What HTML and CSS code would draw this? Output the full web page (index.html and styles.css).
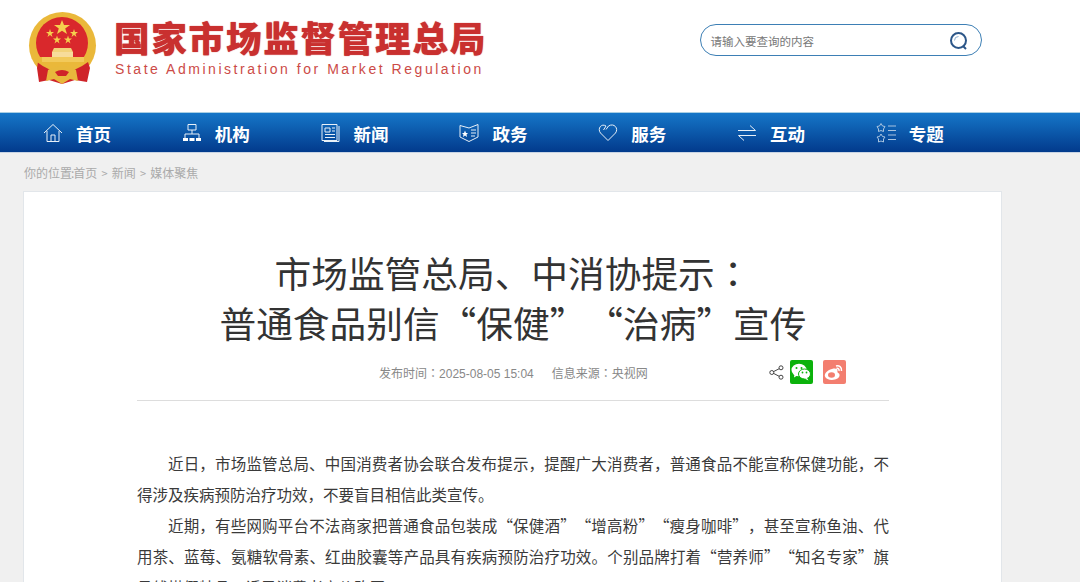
FILE: index.html
```html
<!DOCTYPE html>
<html lang="zh-CN">
<head>
<meta charset="utf-8">
<title>市场监管总局、中消协提示</title>
<link rel="stylesheet" href="styles.css">
</head>
<body>
<header class="top">
  <div class="brand">
    <svg class="emblem" width="70" height="72" viewBox="0 0 70 72">
      <circle cx="34.500" cy="33.500" r="33.500" fill="#eab83a"/>
      <circle cx="34" cy="31" r="26" fill="#d9282c"/>
      <path d="M10 50 L9 56 L11 70 L21 68 L34 72 L47 68 L59 70 L62 56 L60 50 Z" fill="#cf2329"/>
      <path d="M12 45 H57 L60 50 Q34 70 9 50 Z" fill="#eab83a"/>
      <path d="M14 45 H56 V50 H14 Z" fill="#f2c95a"/>
      <path d="M24 40 H45 V45 H24 Z" fill="#f7dc9b"/>
      <path d="M26 36 H43 L45 40 H24 Z" fill="#f3d27a"/>
      <path d="M20 58 Q34 50 48 58 L50 69 L42 67 L34 72 L26 67 L18 69 Z" fill="#e8b83c"/>
      <path d="M27 60 Q34 56 41 60 L38 64 H30 Z" fill="#cf2329"/>
      <polygon class="star" points="34,8 36,13 42,13 37.200,16.500 39,22 34,18.700 29,22 30.800,16.500 26,13 32,13"/>
      <polygon class="star" points="22,17 23,20 26,20 23.500,22 24.500,25 22,23 19.500,25 20.500,22 18,20 21,20"/>
      <polygon class="star" points="46,17 47,20 50,20 47.500,22 48.500,25 46,23 43.500,25 44.500,22 42,20 45,20"/>
      <polygon class="star" points="29,23.500 30,26.500 33,26.500 30.500,28.500 31.500,31.500 29,29.500 26.500,31.500 27.500,28.500 25,26.500 28,26.500"/>
      <polygon class="star" points="40,23.500 41,26.500 44,26.500 41.500,28.500 42.500,31.500 40,29.500 37.500,31.500 38.500,28.500 36,26.500 39,26.500"/>
    </svg>
    <div class="brand-text">
      <div class="cn-name">国家市场监督管理总局</div>
      <div class="en-name">State Administration for Market Regulation</div>
    </div>
  </div>
  <div class="search">
    <span class="search-text">请输入要查询的内容</span>
    <svg class="search-ico" width="20" height="20" viewBox="0 0 20 20" fill="none">
      <circle cx="9.500" cy="9.500" r="7.500" stroke="#2c5688" stroke-width="2"/>
      <path d="M14 15 l3 3" stroke="#2c5688" stroke-width="2"/>
      <path d="M5.500 9.500 a4 4 0 0 1 4 -4" stroke="#8fb0d0" stroke-width="1"/>
    </svg>
  </div>
</header>

<nav class="nav">
  <a class="nav-item">
    <svg class="ico" width="20" height="20" viewBox="0 0 20 20"><path d="M1 10 L10 1.500 L19 10 M4 8 V18.500 H16 V8 M8 18.500 V12 H12 V18.500"/></svg>
    <span>首页</span>
  </a>
  <a class="nav-item">
    <svg class="ico" width="20" height="20" viewBox="0 0 20 20"><path d="M6 1.500 H14 V7 H6 Z M10 7 V11 M3 15 V11 H17 V15"/><path class="fill" d="M1 15 H6 V18 H1 Z M7.500 15 H12.500 V18 H7.500 Z M14 15 H19 V18 H14 Z"/></svg>
    <span>机构</span>
  </a>
  <a class="nav-item">
    <svg class="ico" width="20" height="20" viewBox="0 0 20 20"><path d="M1 1.500 H16 V17.500 H1 Z M18 3 V18.500 H3 M4 5 H9 V9 H4 Z M11 5 H14 M11 8 H14 M4 11.500 H14 M4 14.500 H14"/></svg>
    <span>新闻</span>
  </a>
  <a class="nav-item">
    <svg class="ico" width="20" height="20" viewBox="0 0 20 20"><path d="M1 2.500 L10 5 L19 1.500 V14 L10 18.500 L1 14 Z M12 7 H17 M12 10 H17 M12 13 H16"/><path class="fill" d="M6 7.500 L7 10 L9 10 L7.500 11.500 L8 14 L6 12.500 L4 14 L4.500 11.500 L3 10 L5 10 Z"/></svg>
    <span>政务</span>
  </a>
  <a class="nav-item">
    <svg class="ico" width="20" height="20" viewBox="0 0 20 20"><path d="M10 17.500 L2.500 10 C-1 5.500 3.500 0 8 3 L5.500 7 M10 17.500 L17.500 10 C21 5.500 16 -0.500 10.500 3 L8 6.500"/></svg>
    <span>服务</span>
  </a>
  <a class="nav-item">
    <svg class="ico" width="20" height="20" viewBox="0 0 20 20"><path d="M1 7.500 H18.500 L13 2.500 M19 12.500 H1.500 L7 17.500"/></svg>
    <span>互动</span>
  </a>
  <a class="nav-item">
    <svg class="ico ico-soft" width="20" height="20" viewBox="0 0 20 20"><path d="M5 .500 L6.500 3 L9 3.500 L7.500 6 L7.500 8.500 L5 7.500 L2.500 8.500 L2.500 6 L1 3.500 L3.500 3 Z M5 11 L6.500 13.500 L9 14 L7.500 16 L7.500 19 L5 18 L2.500 19 L2.500 16 L1 14 L3.500 13.500 Z M12 3 H20 M12 7.500 H20 M12 12 H20 M12 16.500 H20"/></svg>
    <span>专题</span>
  </a>
</nav>

<main class="page">
  <div class="crumbs">你的位置<span class="colon">:</span>首页 <i>&gt;</i> 新闻 <i>&gt;</i> 媒体聚焦</div>
  <article class="card">
    <h1 class="title">市场监管总局、中消协提示<span class="cp" lang="zh-TW">：</span><br>普通食品别信“保健”“治病”宣传</h1>
    <div class="meta">
      <div class="meta-info">
        <span>发布时间<span class="cp" lang="zh-TW">：</span>2025-08-05 15:04</span>
        <span>信息来源<span class="cp" lang="zh-TW">：</span>央视网</span>
      </div>
      <div class="share">
        <svg class="share-ico" width="15" height="15" viewBox="0 0 15 15" fill="none"><circle cx="12" cy="2.800" r="2"/><circle cx="2.800" cy="7.500" r="2"/><circle cx="12" cy="12.200" r="2"/><path d="M4.600 6.600 L10.200 3.700 M4.600 8.400 L10.200 11.300"/></svg>
        <span class="badge wechat">
          <svg width="20" height="18" viewBox="0 0 20 18"><ellipse cx="8" cy="7" rx="7.500" ry="6.300" fill="#fff"/><path d="M3.500 11 L3 14.500 L7 12Z" fill="#fff"/><ellipse cx="13.500" cy="11" rx="6" ry="5" fill="#fff" stroke="#0bb20b"/><path d="M16 15 L17.500 17.500 L13.500 15.500Z" fill="#fff"/><circle cx="5.500" cy="5" r="1" fill="#0bb20b"/><circle cx="10.500" cy="5" r="1" fill="#0bb20b"/><circle cx="11.500" cy="9.500" r=".9" fill="#0bb20b"/><circle cx="15.500" cy="9.500" r=".9" fill="#0bb20b"/></svg>
        </span>
        <span class="badge weibo">
          <svg width="20" height="18" viewBox="0 0 20 18"><path d="M8 6 C3 7 0 11 1 13.500 C2 16.500 7 17.500 11 16.500 C15 15.500 16.500 12.500 15 10.500 C14 9.500 13 9.500 13.500 8 C14 5.500 11 5 8 6Z" fill="#fff"/><ellipse cx="7.500" cy="12" rx="3.500" ry="2.800" fill="#f37e6f"/><path d="M12 3 C15 2 18 4 17.500 8 M12.500 5.500 C14 5 15.500 6 15 8" stroke="#fff" stroke-width="1.500" fill="none"/></svg>
        </span>
      </div>
    </div>
    <div class="body">
      <p>近日，市场监管总局、中国消费者协会联合发布提示，提醒广大消费者，普通食品不能宣称保健功能，不得涉及疾病预防治疗功效，不要盲目相信此类宣传。</p>
      <p>近期，有些网购平台不法商家把普通食品包装成“保健酒”“增高粉”“瘦身咖啡”，甚至宣称鱼油、代用茶、蓝莓、氨糖软骨素、红曲胶囊等产品具有疾病预防治疗功效。个别品牌打着“营养师”“知名专家”旗号线搭假特品，诱导消费者高价购买。</p>
    </div>
  </article>
</main>
</body>
</html>
```
FILE: styles.css
```css
html, body { margin: 0; padding: 0; height: 582px; overflow: hidden; }
body { background: #f0f0f0; font-family: "Liberation Sans", "Noto Sans CJK SC", sans-serif; color: #333; text-spacing-trim: space-all; }

.top { height: 112px; background: #fff; display: flex; justify-content: space-between; box-sizing: border-box; padding: 12px 98px 0 28px; }
.brand { display: flex; gap: 16px; align-items: flex-start; }
.emblem { display: block; }
.star { fill: #f5d04e; }
.brand-text { padding-top: 5px; width: 372px; }
.cn-name { font-family: "Noto Sans CJK SC", sans-serif; font-weight: 900; font-size: 35.500px; line-height: 40px; letter-spacing: 1.800px; color: #c9302f; text-shadow: 0 0 1px #c9302f; white-space: nowrap; }
.en-name { font-size: 14px; line-height: 16px; margin: 4px 0 0 1px; letter-spacing: 2.540px; color: #cc4b47; white-space: nowrap; }

.search { margin-top: 12px; width: 282px; height: 32px; box-sizing: border-box; border: 1px solid #3d7fb5; border-radius: 16px; background: #fff; display: flex; align-items: center; justify-content: space-between; padding: 0 12px 0 9.500px; }
.search-text { font-family: "Noto Sans CJK SC", sans-serif; font-size: 11.500px; color: #777; margin-top: 2px; }
.search-ico { margin-top: 2px; }

.nav { height: 41px; box-sizing: border-box; border-top: 1px solid #a9cfe4; border-bottom: 1px solid #c8d4e4; background: linear-gradient(#1576c8, #023a8c); display: flex; padding-left: 43px; }
.nav-item { width: 138.800px; display: flex; align-items: center; gap: 13px; color: #fff; font-family: "Noto Sans CJK SC", sans-serif; font-size: 17.500px; font-weight: 700; }
.nav-item span { margin-top: 2px; }
.ico { fill: none; stroke: #e8f0f8; stroke-width: 1; flex: none; }
.ico .fill { fill: #fff; stroke: none; }
.ico-soft { stroke: #a8c4e0; }

.page { padding: 0 78px 0 23px; }
.crumbs { height: 38px; box-sizing: border-box; padding: 11px 0 0 1px; font-family: "Noto Sans CJK SC", sans-serif; font-size: 12px; line-height: 18px; color: #aaa; }
.crumbs i { font-style: normal; font-size: 11px; margin: 0 1.500px; }
.colon { margin: 0 -1px; }

.card { background: #fff; border: 1px solid #e2e6ea; box-sizing: border-box; width: 979px; height: 500px; padding: 55px 112px 0 113px; }
.title { margin: 0; text-align: center; font-family: "Noto Sans CJK SC", sans-serif; font-weight: 400; font-size: 36.700px; line-height: 50px; color: #333; white-space: nowrap; }
.cp { font-family: "Noto Sans CJK TC", sans-serif; }
.meta { height: 54px; box-sizing: border-box; padding: 14px 43px 0 242px; border-bottom: 1px solid #ddd; display: flex; justify-content: space-between; align-items: flex-start; }
.meta-info { display: flex; gap: 18px; font-family: "Liberation Sans", "Noto Sans CJK SC", sans-serif; font-size: 12px; line-height: 24px; color: #888; white-space: nowrap; }
.share { display: flex; align-items: center; gap: 9.500px; margin-top: -1px; }
.share-ico { stroke: #444; stroke-width: 1; margin-right: -3.500px; }
.badge { width: 23.500px; height: 24px; border-radius: 2px; display: flex; align-items: center; justify-content: center; }
.wechat { background: #0bb20b; }
.weibo { background: #f37e6f; }

.body { padding-top: 47px; }
.body p { margin: 0; text-indent: 2em; font-family: "Noto Sans CJK SC", sans-serif; font-size: 15.500px; line-height: 31px; color: #3a3a3a; text-align: justify; }
```
